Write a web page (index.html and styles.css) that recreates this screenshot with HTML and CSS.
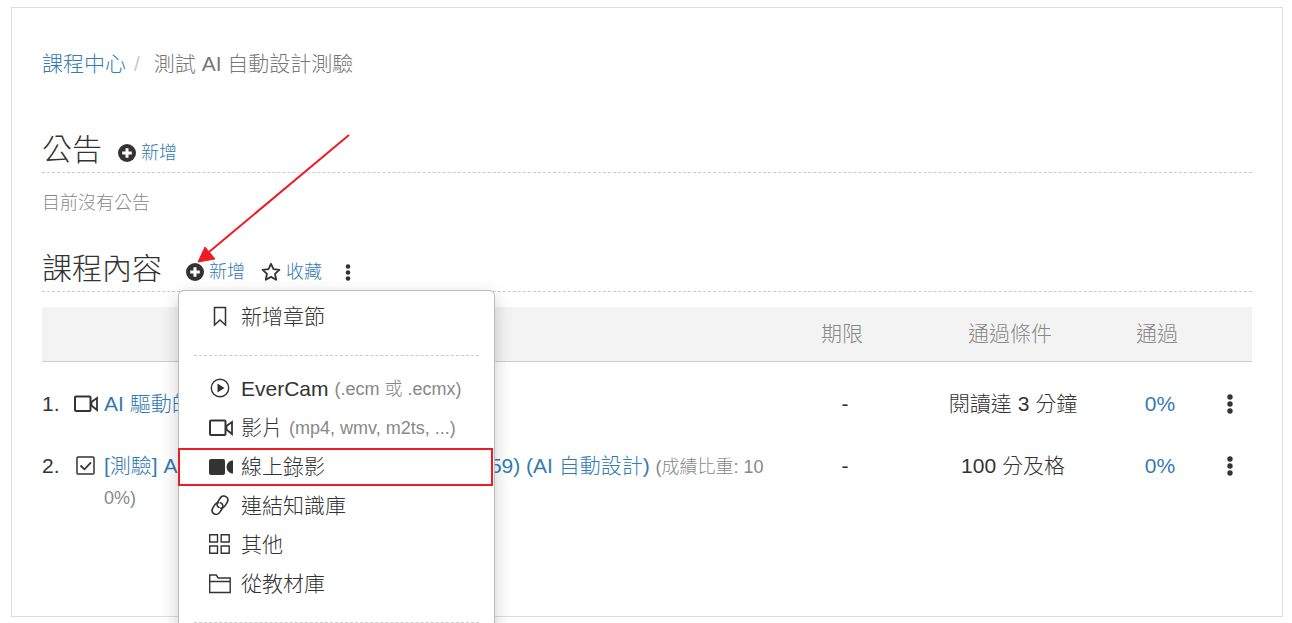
FILE: index.html
```
<!DOCTYPE html>
<html lang="zh-Hant">
<head>
    <meta charset="UTF-8">
    <meta name="viewport" content="width=device-width, initial-scale=1.0">
    <title>測試 AI 自動設計測驗</title>
    <link rel="stylesheet" href="styles.css">
</head>
<body>
    <!-- shared icons -->
    <svg class="sprite" aria-hidden="true">
        <symbol id="i-plus" viewBox="0 0 18 18">
            <circle cx="9" cy="9" r="9" fill="currentColor"/>
            <path d="M9 4.200v9.600M4.200 9h9.600" stroke="#fff" stroke-width="3" fill="none"/>
        </symbol>
        <symbol id="i-dots" viewBox="0 0 6 20">
            <circle cx="3" cy="3" r="2.7" fill="currentColor"/>
            <circle cx="3" cy="10" r="2.7" fill="currentColor"/>
            <circle cx="3" cy="17" r="2.7" fill="currentColor"/>
        </symbol>
        <symbol id="i-video" viewBox="0 0 24 24">
            <rect x="1" y="4.500" width="15.500" height="14.500" rx="1" fill="none" stroke="currentColor" stroke-width="2"/>
            <path d="M23 6v12l-5.500-4.500v-3.500z" fill="none" stroke="currentColor" stroke-width="1.800"/>
        </symbol>
    </svg>

    <div class="card">
        <nav class="breadcrumb">
            <a href="#">課程中心</a>
            <span class="slash">/</span>
            <span class="current">測試 AI 自動設計測驗</span>
        </nav>

        <section class="section">
            <div class="section-head">
                <h2>公告</h2>
                <a class="action" href="#"><svg class="icon-plus"><use href="#i-plus"/></svg>新增</a>
            </div>
            <p class="empty">目前沒有公告</p>
        </section>

        <section class="section">
            <div class="section-head wide">
                <h2>課程內容</h2>
                <div class="dropdown">
                    <button class="action" type="button"><svg class="icon-plus"><use href="#i-plus"/></svg>新增</button>
                    <ul class="menu">
                        <li><a href="#"><svg class="icon" viewBox="0 0 24 24"><path d="M5.500 2.500h11v17.500l-5.500-5-5.500 5z" fill="none" stroke="currentColor" stroke-width="1.500"/></svg>新增章節</a></li>
                        <li class="divider"></li>
                        <li><a href="#"><svg class="icon" viewBox="0 0 24 24"><circle cx="11" cy="11" r="8.700" fill="none" stroke="currentColor" stroke-width="1.400"/><path d="M8.500 6.500l7 4.500-7 4.500z" fill="currentColor"/></svg>EverCam <small>(.ecm 或 .ecmx)</small></a></li>
                        <li><a href="#"><svg class="icon"><use href="#i-video"/></svg>影片 <small>(mp4, wmv, m2ts, ...)</small></a></li>
                        <li class="marked"><a href="#"><svg class="icon" viewBox="0 0 24 24"><rect x="0" y="4" width="16" height="16" rx="2" fill="currentColor"/><path d="M24 5.500v13h-1.500c-3-1-5-3.500-5-6.500s2-5.500 5-6.500z" fill="currentColor"/></svg>線上錄影</a></li>
                        <li><a href="#"><svg class="icon" viewBox="0 0 24 24"><g fill="none" stroke="currentColor" stroke-width="1.600" stroke-linecap="round"><path d="M10 13.500c-2.300-1.200-2.500-3.500-1.200-5.700l2.300-3.600c1.400-2.200 4-2.800 5.900-1.600s2.400 3.700 1.100 5.900l-2.300 3.600c-1 1.500-2.400 2.200-4 2"/><path d="M11.500 8.800c2.500 1 3 3.500 1.700 5.700l-2.300 3.600c-1.400 2.200-4 2.800-5.900 1.600s-2.400-3.700-1.100-5.900l2-3.200c1-1.500 2.200-2 3.600-1.900"/></g></svg>連結知識庫</a></li>
                        <li><a href="#"><svg class="icon" viewBox="0 0 24 24"><path d="M.7 1.700h7.800v7.300h-7.800zM12.200 1.700h8v7.300h-8zM.7 13h7.800v7.300h-7.800zM12.200 13h8v7.300h-8z" fill="none" stroke="currentColor" stroke-width="1.400"/></svg>其他</a></li>
                        <li><a href="#"><svg class="icon" viewBox="0 0 24 24"><path d="M.7 20.500v-17.500h6.500l2 3h12v14.500zM.7 9.500h20.500" fill="none" stroke="currentColor" stroke-width="1.400"/></svg>從教材庫</a></li>
                        <li class="divider"></li>
                    </ul>
                </div>
                <a class="action favorite" href="#"><svg class="icon-star" viewBox="0 0 20 20"><path d="M10 1.800l2.500 5.400 5.900.7-4.400 4 1.200 5.900L10 14.900l-5.200 2.900L6 11.900l-4.400-4 5.900-.7z" fill="none" stroke="currentColor" stroke-width="1.800" stroke-linejoin="round"/></svg>收藏</a>
                <button class="more" type="button" aria-label="更多"><svg><use href="#i-dots"/></svg></button>
            </div>

            <table class="lessons">
                <colgroup>
                    <col class="col-no">
                    <col class="col-type">
                    <col>
                    <col class="col-due">
                    <col class="col-rule">
                    <col class="col-pass">
                    <col class="col-more">
                </colgroup>
                <thead>
                    <tr>
                        <th colspan="3"></th>
                        <th>期限</th>
                        <th>通過條件</th>
                        <th>通過</th>
                        <th></th>
                    </tr>
                </thead>
                <tbody>
                    <tr>
                        <td>1.</td>
                        <td><svg class="icon"><use href="#i-video"/></svg></td>
                        <td class="title"><a href="#">AI 驅動的學習設計</a></td>
                        <td>-</td>
                        <td>閱讀達 3 分鐘</td>
                        <td><a href="#">0%</a></td>
                        <td><button class="more" type="button" aria-label="更多"><svg><use href="#i-dots"/></svg></button></td>
                    </tr>
                    <tr>
                        <td>2.</td>
                        <td><svg class="icon" viewBox="0 0 24 24"><rect x="3" y="3" width="17" height="17" rx="1" fill="none" stroke="currentColor" stroke-width="1.500"/><path d="M6.500 11.500l4 3.800 6.500-7" fill="none" stroke="currentColor" stroke-width="1.800"/></svg></td>
                        <td class="title"><a href="#">[測驗] AI 驅動的學習設計 (2025-03-11 10:59) (AI 自動設計)</a> <small>(成績比重: 100%)</small></td>
                        <td>-</td>
                        <td>100 分及格</td>
                        <td><a href="#">0%</a></td>
                        <td><button class="more" type="button" aria-label="更多"><svg><use href="#i-dots"/></svg></button></td>
                    </tr>
                </tbody>
            </table>
        </section>

        <!-- pointer to the add button -->
        <svg class="arrow" viewBox="0 0 154 130" aria-hidden="true">
            <path d="M153 1L13 118" stroke="#ed1c24" stroke-width="2" fill="none"/>
            <path d="M2 128l7-15 10 12z" fill="#ed1c24" stroke="#ed1c24"/>
        </svg>
    </div>
</body>
</html>
```
FILE: styles.css
```
* {
    box-sizing: border-box;
}
body {
    margin: 0;
    padding: 7px 9px 6px 11px;
    height: 100vh;
    overflow: hidden;
    background-color: #fff;
    color: #333;
    font-family: "Liberation Sans", "Noto Sans CJK TC", sans-serif;
    font-size: 21px;
    font-weight: 300;
    line-height: 30px;
}
a {
    color: #337ab7;
    text-decoration: none;
}
small {
    font-size: 18px;
    color: #888;
}
button {
    padding: 0;
    border: none;
    background: none;
    font: inherit;
    cursor: pointer;
}
.sprite {
    display: none;
}
.card {
    position: relative;
    padding: 41px 30px 98px;
    border: 1px solid #ddd;
}

/* breadcrumb */
.breadcrumb {
    display: flex;
    margin-bottom: 51px;
}
.breadcrumb .slash {
    margin: 0 14px 0 8px;
    color: #ccc;
}
.breadcrumb .current {
    color: #777;
}

/* sections */
.section + .section {
    margin-top: 31px;
}
.section-head {
    display: flex;
    align-items: flex-end;
    gap: 16px;
    padding-bottom: 2px;
    border-bottom: 1px dashed #ccc;
}
.section-head.wide h2 {
    margin-right: 8px;
}
h2 {
    margin: 0;
    font-size: 30px;
    font-weight: 300;
    line-height: 40px;
}
.action {
    display: flex;
    align-items: center;
    gap: 5px;
    color: #337ab7;
    font-size: 18px;
    line-height: 34px;
}
.action svg {
    color: #333;
}
.icon-plus {
    width: 18px;
    height: 18px;
}
.icon-star {
    width: 20px;
    height: 20px;
}
.empty {
    margin: 15px 0 0;
    font-size: 18px;
    color: #888;
}
.more {
    display: inline-flex;
    align-items: center;
    justify-content: center;
    width: 20px;
    height: 30px;
    color: #333;
    vertical-align: top;
}
.section-head .more {
    height: 34px;
}
.more svg {
    width: 6px;
    height: 20px;
}
.section-head .more svg {
    height: 17px;
}
.icon {
    width: 24px;
    height: 24px;
    flex: none;
}

/* add menu */
.dropdown {
    position: relative;
}
.menu {
    position: absolute;
    z-index: 10;
    top: calc(100% + 1px);
    left: -8px;
    width: 317px;
    margin: 0;
    padding: 6px 0;
    list-style: none;
    background-color: #fff;
    border: 1px solid #bbb;
    border-radius: 6px;
    box-shadow: 0 6px 18px rgba(0, 0, 0, 0.2);
}
.menu li {
    position: relative;
}
.menu a {
    display: flex;
    align-items: center;
    height: 39px;
    padding-left: 30px;
    color: #333;
    white-space: nowrap;
}
.menu .icon {
    margin-right: 8px;
}
.menu small {
    margin-left: 6px;
}
.menu .divider {
    margin: 19px 15px 13px;
    border-top: 1px dashed #ccc;
}
.menu .marked::after {
    content: "";
    position: absolute;
    top: 1px;
    right: 1px;
    bottom: 0;
    left: -1px;
    border: 2px solid #ed1c24;
}

/* lesson table */
.lessons {
    width: 100%;
    margin-top: 15px;
    table-layout: fixed;
    border-collapse: separate;
    border-spacing: 0;
}
.col-no {
    width: 32px;
}
.col-type {
    width: 30px;
}
.col-due {
    width: 144px;
}
.col-rule {
    width: 192px;
}
.col-pass {
    width: 102px;
}
.col-more {
    width: 44px;
}
.lessons th {
    height: 55px;
    padding: 0;
    background-color: #f3f3f3;
    border-bottom: 1px solid #ccc;
    color: #888;
    font-weight: 300;
}
.lessons td {
    padding: 27px 0 5px 6px;
    text-align: center;
    vertical-align: top;
}
.lessons td:first-child,
.lessons td:nth-child(2),
.lessons .title {
    padding-left: 0;
    text-align: left;
}
.lessons td:last-child {
    padding-left: 0;
}
.lessons .title {
    word-break: break-all;
}
.lessons td .icon {
    display: block;
    margin-top: 3px;
}

.arrow {
    position: absolute;
    z-index: 11;
    top: 126px;
    left: 184px;
    width: 154px;
    height: 130px;
    pointer-events: none;
}
```
